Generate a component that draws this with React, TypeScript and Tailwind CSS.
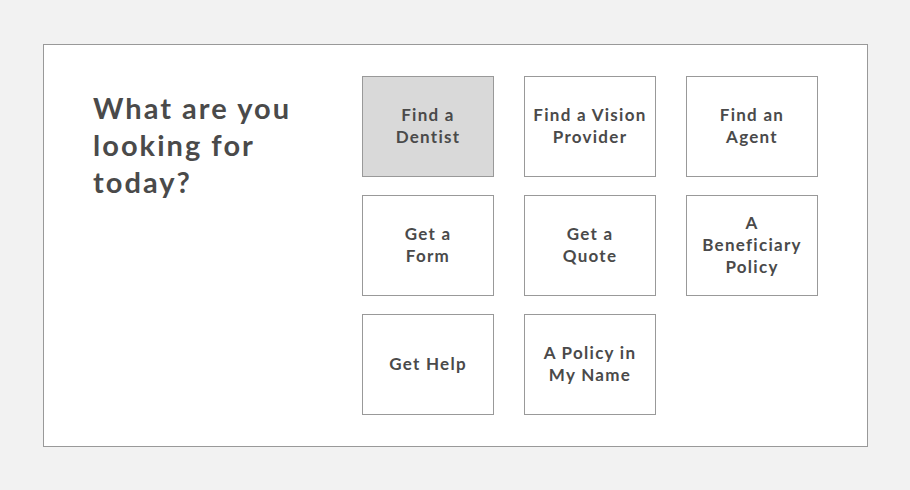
import React from "react";

const items = [
  { label: "Find a\nDentist", active: true },
  { label: "Find a Vision\nProvider" },
  { label: "Find an\nAgent" },
  { label: "Get a\nForm" },
  { label: "Get a\nQuote" },
  { label: "A\nBeneficiary\nPolicy" },
  { label: "Get Help" },
  { label: "A Policy in\nMy Name" },
];

export default function App() {
  return (
    <div
      className="min-h-screen w-[910px] h-[490px] bg-[#f2f2f2] pl-[43px] pt-[44px]"
      style={{ fontFamily: "Lato, 'Noto Sans', sans-serif" }}
    >
      <div className="flex w-[825px] h-[403px] border border-[#999999] bg-white pl-[49px] pt-[31px]">
        <div className="w-[269px] shrink-0">
          <h1 className="max-w-[230px] pt-[13px] text-[29px] leading-[37px] font-bold tracking-[0.07em] text-[#4a4a4a]">
            What are you looking for today?
          </h1>
        </div>
        <div className="grid grid-cols-[132px_132px_132px] auto-rows-[101px] gap-x-[30px] gap-y-[18px]">
          {items.map((it, i) => (
            <button
              key={i}
              className={`flex items-center justify-center border border-[#999999] pb-[2px] text-center whitespace-pre-line text-[17px] leading-[22px] font-bold tracking-[0.075em] text-[#4a4a4a] ${
                it.active ? "bg-[#d9d9d9]" : "bg-white"
              }`}
            >
              {it.label}
            </button>
          ))}
        </div>
      </div>
    </div>
  );
}
